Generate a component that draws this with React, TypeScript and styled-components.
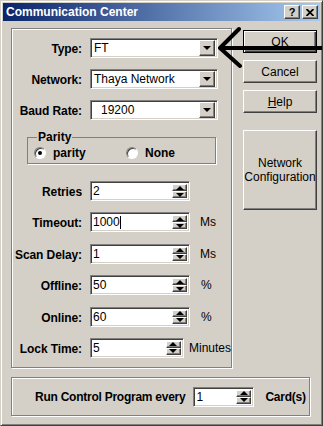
import React from 'react';
import styled, { createGlobalStyle } from 'styled-components';

const GlobalStyle = createGlobalStyle`
  html, body {
    margin: 0;
    padding: 0;
    background: #d4d0c8;
  }
  body {
    font-family: "Liberation Sans", Arial, sans-serif;
    color: #000;
  }
`;

const raised = `
  background: #d4d0c8;
  border: 1px solid;
  border-color: #fff #404040 #404040 #fff;
  box-shadow: inset -1px -1px #808080, inset 1px 1px #d4d0c8;
  box-sizing: border-box;
`;

const sunken = `
  background: #fff;
  border: 1px solid;
  border-color: #808080 #fff #fff #808080;
  box-shadow: inset 1px 1px #404040, inset -1px -1px #d4d0c8;
  box-sizing: border-box;
`;

const Window = styled.div`
  position: relative;
  width: 323px;
  height: 426px;
  box-sizing: border-box;
  background: #d4d0c8;
  border: 1px solid;
  border-color: #d4d0c8 #404040 #404040 #d4d0c8;
  box-shadow: inset 1px 1px #fff, inset -1px -1px #808080;
  padding: 2px;
  display: flex;
  flex-direction: column;
  overflow: hidden;
`;

const TitleBar = styled.div`
  height: 18px;
  flex-shrink: 0;
  display: flex;
  align-items: center;
  padding: 0 2px 0 3px;
  background: linear-gradient(to right, #0a246a, #a6caf0);
  color: #fff;
  font-weight: bold;
  font-size: 12px;
`;

const TitleText = styled.span`
  flex: 1;
  white-space: nowrap;
`;

const TitleButton = styled.div`
  ${raised}
  width: 16px;
  height: 14px;
  margin-left: 2px;
  display: flex;
  align-items: center;
  justify-content: center;
  color: #000;
  font-size: 11px;
  font-weight: bold;
  line-height: 1;
`;

const Body = styled.div`
  padding: 7px 0 0 8px;
  display: flex;
  flex-direction: column;
`;

const TopRow = styled.div`
  display: flex;
  align-items: flex-start;
`;

const EtchedPanel = styled.div`
  width: 221px;
  height: 340px;
  box-sizing: border-box;
  border: 1px solid #808080;
  box-shadow: inset 1px 1px #fff, 1px 1px 0 #fff;
  padding-top: 9px;
  display: flex;
  flex-direction: column;
  overflow: hidden;
`;

const Stack = styled.div<{ $gap: number; $top?: number }>`
  display: flex;
  flex-direction: column;
  gap: ${p => p.$gap}px;
  margin-top: ${p => p.$top ?? 0}px;
`;

const Row = styled.div`
  display: flex;
  align-items: center;
  height: 20px;
`;

const Label = styled.span`
  width: 70px;
  margin-right: 8px;
  flex-shrink: 0;
  text-align: right;
  font-size: 12px;
  font-weight: bold;
  letter-spacing: -0.1px;
  white-space: nowrap;
  padding-top: 2px;
`;

const Combo = styled.div`
  ${sunken}
  width: 128px;
  height: 20px;
  display: flex;
  align-items: center;
  padding: 0 2px 0 2px;
  font-size: 12px;
`;

const ComboText = styled.span<{ $indent?: number }>`
  flex: 1;
  padding-left: ${p => p.$indent ?? 1}px;
  white-space: nowrap;
`;

const DropButton = styled.div`
  ${raised}
  width: 16px;
  height: 16px;
  display: flex;
  align-items: center;
  justify-content: center;
`;

const DownTri = styled.div`
  width: 0;
  height: 0;
  border-left: 4px solid transparent;
  border-right: 4px solid transparent;
  border-top: 4px solid #000;
`;

const Spin = styled.div<{ $w: number }>`
  ${sunken}
  width: ${p => p.$w}px;
  height: 20px;
  display: flex;
  align-items: stretch;
  padding: 2px;
  font-size: 12px;
`;

const SpinText = styled.span`
  flex: 1;
  display: flex;
  align-items: center;
  white-space: nowrap;
`;

const Caret = styled.span`
  display: inline-block;
  width: 1px;
  height: 13px;
  background: #000;
`;

const SpinButtons = styled.div`
  width: 15px;
  display: flex;
  flex-direction: column;
`;

const SpinHalf = styled.div`
  ${raised}
  flex: 1;
  display: flex;
  align-items: center;
  justify-content: center;
`;

const UpTri = styled.div`
  width: 0;
  height: 0;
  border-left: 4px solid transparent;
  border-right: 4px solid transparent;
  border-bottom: 4px solid #000;
`;

const Unit = styled.span<{ $gap: number }>`
  margin-left: ${p => p.$gap}px;
  font-size: 12px;
  white-space: nowrap;
`;

const Group = styled.fieldset`
  margin: 11px 0 0 15px;
  width: 189px;
  height: 33px;
  box-sizing: border-box;
  border: 1px solid #808080;
  box-shadow: 1px 1px 0 #fff;
  padding: 0 0 0 6px;
`;

const Legend = styled.legend`
  font-size: 12px;
  font-weight: bold;
  padding: 0 1px;
  margin-left: 3px;
  line-height: 13px;
`;

const RadioRow = styled.div`
  display: flex;
  align-items: center;
  height: 17px;
`;

const RadioItem = styled.label<{ $w?: number }>`
  display: flex;
  align-items: center;
  width: ${p => (p.$w ? `${p.$w}px` : 'auto')};
  font-size: 12px;
  font-weight: bold;
`;

const RadioCircle = styled.span<{ $on?: boolean }>`
  width: 12px;
  height: 12px;
  box-sizing: border-box;
  border-radius: 50%;
  border: 1px solid;
  border-color: #808080 #fff #fff #808080;
  background: #fff;
  box-shadow: inset 1px 1px #404040;
  margin-right: 7px;
  display: flex;
  align-items: center;
  justify-content: center;
  &::after {
    content: '';
    width: 4px;
    height: 4px;
    border-radius: 50%;
    background: ${p => (p.$on ? '#000' : 'transparent')};
  }
`;

const ButtonColumn = styled.div`
  margin-left: 11px;
  padding-top: 2px;
  display: flex;
  flex-direction: column;
  gap: 7px;
`;

const Button = styled.div<{ $h?: number; $default?: boolean; $top?: number }>`
  ${raised}
  width: 74px;
  height: ${p => p.$h ?? 23}px;
  margin-top: ${p => p.$top ?? 0}px;
  display: flex;
  align-items: center;
  justify-content: center;
  text-align: center;
  font-size: 12px;
  line-height: 14px;
  ${p =>
    p.$default &&
    `
    border: 1px solid #000;
    box-shadow: inset 1px 1px #fff, inset -1px -1px #404040, inset -2px -2px #808080;
  `}
`;

const BottomBox = styled.div`
  margin-top: 9px;
  width: 299px;
  height: 39px;
  box-sizing: border-box;
  border: 1px solid #808080;
  box-shadow: inset 1px 1px #fff, 1px 1px 0 #fff;
  display: flex;
  align-items: center;
  padding-left: 23px;
`;

const BoldText = styled.span<{ $left?: number; $right?: number }>`
  font-size: 12px;
  font-weight: bold;
  letter-spacing: -0.25px;
  white-space: nowrap;
  margin-left: ${p => p.$left ?? 0}px;
  margin-right: ${p => p.$right ?? 0}px;
`;

const Arrow = styled.svg`
  position: absolute;
  left: 214px;
  top: 24px;
`;

const SpinBox: React.FC<{ value: React.ReactNode; width?: number }> = ({ value, width = 100 }) => (
  <Spin $w={width}>
    <SpinText>{value}</SpinText>
    <SpinButtons>
      <SpinHalf><UpTri /></SpinHalf>
      <SpinHalf><DownTri /></SpinHalf>
    </SpinButtons>
  </Spin>
);

const ComboBox: React.FC<{ value: string; indent?: number }> = ({ value, indent }) => (
  <Combo>
    <ComboText $indent={indent}>{value}</ComboText>
    <DropButton><DownTri /></DropButton>
  </Combo>
);

const spinRows = [
  { label: 'Retries', value: '2' },
  { label: 'Timeout:', value: 'caret', unit: 'Ms', gap: 10 },
  { label: 'Scan Delay:', value: '1', unit: 'Ms', gap: 10 },
  { label: 'Offline:', value: '50', unit: '%', gap: 11 },
  { label: 'Online:', value: '60', unit: '%', gap: 11 },
  { label: 'Lock Time:', value: '5', unit: 'Minutes', gap: 5 },
];

const App: React.FC = () => {
  return (
    <Window>
      <GlobalStyle />
      <TitleBar>
        <TitleText>Communication Center</TitleText>
        <TitleButton>?</TitleButton>
        <TitleButton>
          <svg width="8" height="7" viewBox="0 0 8 7">
            <path d="M0.5 0 L7.5 7 M7.5 0 L0.5 7" stroke="#000" strokeWidth="1.8" />
          </svg>
        </TitleButton>
      </TitleBar>

      <Body>
        <TopRow>
          <EtchedPanel>
            <Stack $gap={11}>
              <Row>
                <Label>Type:</Label>
                <ComboBox value="FT" />
              </Row>
              <Row>
                <Label>Network:</Label>
                <ComboBox value="Thaya Network" />
              </Row>
              <Row>
                <Label>Baud Rate:</Label>
                <ComboBox value="19200" indent={8} />
              </Row>
            </Stack>

            <Group>
              <Legend>Parity</Legend>
              <RadioRow>
                <RadioItem $w={92}>
                  <RadioCircle $on />
                  parity
                </RadioItem>
                <RadioItem>
                  <RadioCircle />
                  None
                </RadioItem>
              </RadioRow>
            </Group>

            <Stack $gap={11.4} $top={17}>
              {spinRows.map(r => (
                <Row key={r.label}>
                  <Label>{r.label}</Label>
                  <SpinBox value={r.value === 'caret' ? <>1000<Caret /></> : r.value} />
                  {r.unit && <Unit $gap={r.gap!}>{r.unit}</Unit>}
                </Row>
              ))}
            </Stack>
          </EtchedPanel>

          <ButtonColumn>
            <Button $default>OK</Button>
            <Button>Cancel</Button>
            <Button><span><u>H</u>elp</span></Button>
            <Button $h={80} $top={10}>Network<br />Configuration</Button>
          </ButtonColumn>
        </TopRow>

        <BottomBox>
          <BoldText $right={8}>Run Control Program every</BoldText>
          <SpinBox value="1" width={61} />
          <BoldText $left={11}>Card(s)</BoldText>
        </BottomBox>
      </Body>

      <Arrow width="109" height="46" viewBox="0 0 109 46">
        <path
          d="M5 23 L109 23 M5 23 L24 4 M5 23 L25 41"
          stroke="#000"
          strokeWidth="4"
          strokeLinecap="round"
          fill="none"
        />
      </Arrow>
    </Window>
  );
};

export default App;
